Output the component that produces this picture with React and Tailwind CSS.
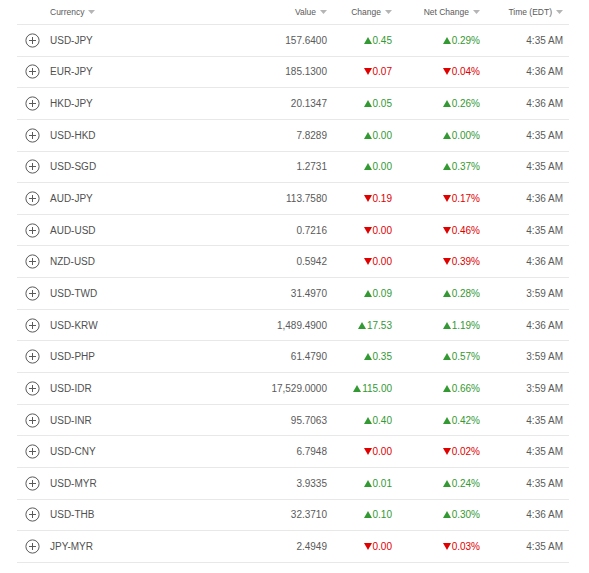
import React from "react";

const rows = [
  ["USD-JPY", "157.6400", "0.45", "0.29%", "4:35 AM", 1],
  ["EUR-JPY", "185.1300", "0.07", "0.04%", "4:36 AM", 0],
  ["HKD-JPY", "20.1347", "0.05", "0.26%", "4:36 AM", 1],
  ["USD-HKD", "7.8289", "0.00", "0.00%", "4:35 AM", 1],
  ["USD-SGD", "1.2731", "0.00", "0.37%", "4:35 AM", 1],
  ["AUD-JPY", "113.7580", "0.19", "0.17%", "4:36 AM", 0],
  ["AUD-USD", "0.7216", "0.00", "0.46%", "4:35 AM", 0],
  ["NZD-USD", "0.5942", "0.00", "0.39%", "4:36 AM", 0],
  ["USD-TWD", "31.4970", "0.09", "0.28%", "3:59 AM", 1],
  ["USD-KRW", "1,489.4900", "17.53", "1.19%", "4:36 AM", 1],
  ["USD-PHP", "61.4790", "0.35", "0.57%", "3:59 AM", 1],
  ["USD-IDR", "17,529.0000", "115.00", "0.66%", "3:59 AM", 1],
  ["USD-INR", "95.7063", "0.40", "0.42%", "4:35 AM", 1],
  ["USD-CNY", "6.7948", "0.00", "0.02%", "4:35 AM", 0],
  ["USD-MYR", "3.9335", "0.01", "0.24%", "4:35 AM", 1],
  ["USD-THB", "32.3710", "0.10", "0.30%", "4:36 AM", 1],
  ["JPY-MYR", "2.4949", "0.00", "0.03%", "4:35 AM", 0],
];

function SortArrow() {
  return (
    <svg width="7" height="4" viewBox="0 0 7 4" className="ml-[4px] shrink-0">
      <path d="M0 0H7L3.5 4Z" fill="#b5b5b5" />
    </svg>
  );
}

function Tri({ up }) {
  return up ? (
    <svg width="8" height="7" viewBox="0 0 8 7" className="mr-[1px] shrink-0">
      <path d="M4 0L8 7H0Z" fill="#339933" />
    </svg>
  ) : (
    <svg width="8" height="7" viewBox="0 0 8 7" className="mr-[1px] shrink-0">
      <path d="M0 0H8L4 7Z" fill="#e00000" />
    </svg>
  );
}

function PlusIcon() {
  return (
    <svg width="15" height="15" viewBox="0 0 15 15">
      <circle cx="7.5" cy="7.5" r="6.6" fill="none" stroke="#5a5a5a" strokeWidth="1" />
      <path d="M7.5 4V11M4 7.5H11" stroke="#5a5a5a" strokeWidth="1" />
    </svg>
  );
}

export default function App() {
  return (
    <div
      className="w-[589px] h-[573px] bg-white pl-[17px]"
      style={{ fontFamily: '"Liberation Sans", Arial, sans-serif' }}
    >
      <div className="w-[552px]">
        <div className="flex h-[25px] items-center border-b border-[#e8e8e8] text-[8.5px] text-[#5a5a5a]">
          <div className="w-[27px]" />
          <div className="w-[156px] flex items-center pl-[6px]">
            Currency
            <SortArrow />
          </div>
          <div className="w-[133px] flex items-center justify-end pr-[6px]">
            Value
            <SortArrow />
          </div>
          <div className="w-[65px] flex items-center justify-end pr-[6px]">
            Change
            <SortArrow />
          </div>
          <div className="w-[88px] flex items-center justify-end pr-[6px]">
            Net Change
            <SortArrow />
          </div>
          <div className="w-[83px] flex items-center justify-end pr-[6px]">
            Time (EDT)
            <SortArrow />
          </div>
        </div>
        {rows.map(([cur, val, ch, pct, time, up]) => (
          <div
            key={cur}
            className="flex h-[31.65px] items-center border-b border-[#e8e8e8] text-[10px]"
          >
            <div className="w-[27px] flex items-center justify-center pl-[3px]">
              <PlusIcon />
            </div>
            <div className="w-[156px] pl-[6px] text-[#505050]">{cur}</div>
            <div className="w-[133px] text-right pr-[6px] text-[#5a5a5a]">{val}</div>
            <div
              className={
                "w-[65px] flex items-center justify-end pr-[6px] " +
                (up ? "text-[#339933]" : "text-[#e00000]")
              }
            >
              <Tri up={up} />
              {ch}
            </div>
            <div
              className={
                "w-[88px] flex items-center justify-end pr-[6px] " +
                (up ? "text-[#339933]" : "text-[#e00000]")
              }
            >
              <Tri up={up} />
              {pct}
            </div>
            <div className="w-[83px] text-right pr-[6px] text-[#5a5a5a]">{time}</div>
          </div>
        ))}
      </div>
    </div>
  );
}
